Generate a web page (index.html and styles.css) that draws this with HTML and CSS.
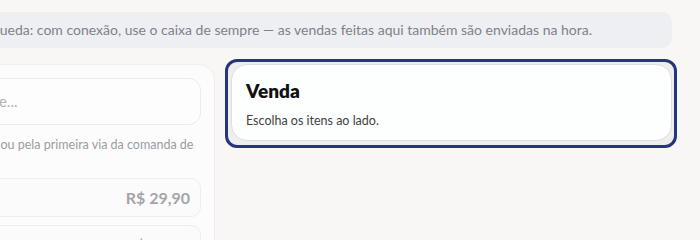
FILE: index.html
```html
<!DOCTYPE html>
<html lang="pt-BR">
<head>
<meta charset="utf-8">
<title>Venda</title>
<link rel="stylesheet" href="styles.css">
</head>
<body>
<div class="page">
  <div class="notice">Modo offline. Em caso de queda: com conexão, use o caixa de sempre — as vendas feitas aqui também são enviadas na hora.</div>
  <div class="columns">
    <section class="catalog">
      <div class="search">Buscar produto pelo nome...</div>
      <p class="hint">Busque pelo nome do produto ou pela primeira via da comanda de mesa.</p>
      <div class="item"><span class="item-name">Pizza média</span><span class="price">R$ 29,90</span></div>
      <div class="item"><span class="item-name">Pizza grande</span><span class="price">R$ 34,90</span></div>
    </section>
    <div class="sale-ring">
      <section class="sale">
        <h2 class="sale-title">Venda</h2>
        <p class="sale-sub">Escolha os itens ao lado.</p>
      </section>
    </div>
  </div>
</div>
</body>
</html>
```

FILE: styles.css
```css
* { box-sizing: border-box; }
html, body { margin: 0; padding: 0; }
body {
  background: #f8f7f6;
  font-family: Lato, "Noto Sans", sans-serif;
  overflow: hidden;
  width: 700px;
  height: 240px;
}
.page {
  margin-left: -300px;
  width: 972px;
  padding-top: 12px;
  display: flex;
  flex-direction: column;
  gap: 16px;
}
.notice {
  height: 36px;
  background: #eeeff3;
  border-radius: 10px;
  color: #7e818a;
  font-size: 14px;
  line-height: 36px;
  white-space: nowrap;
  overflow: hidden;
  text-align: right;
  padding-right: 80px;
}
.columns {
  display: grid;
  grid-template-columns: 1fr 441px;
  gap: 16px;
}
.catalog {
  background: #fcfcfc;
  border: 1px solid #efefef;
  border-radius: 16px;
  padding: 13px 13px 20px;
  height: 300px;
}
.search {
  height: 47px;
  border: 1px solid #ebebeb;
  border-radius: 12px;
  background: #fdfdfd;
  color: #b3b3b3;
  font-size: 15px;
  line-height: 45px;
  padding-left: 118px;
  white-space: nowrap;
}
.hint {
  margin: 11px 0 6px;
  color: #9a9ca2;
  font-size: 12.5px;
  line-height: 18px;
  padding-left: 117px;
  padding-right: 5px;
}
.item {
  height: 39px;
  border: 1px solid #eeeeee;
  border-radius: 10px;
  background: #fbfbfb;
  display: flex;
  align-items: center;
  justify-content: space-between;
  padding: 0 10px 0 14px;
  margin-bottom: 8px;
}
.item-name { color: #555; font-size: 14px; }
.price {
  color: #a4a5a8;
  font-weight: 700;
  font-size: 16px;
}
.sale-ring {
  margin-left: -6px;
  margin-top: -5px;
  align-self: start;
  border: 3px solid #26357f;
  border-radius: 12px;
  background: #efeeec;
  padding: 2px 2px 4px 3px;
  width: 452px;
}
.sale {
  background: #fdfefe;
  border: 1px solid #dedede;
  border-radius: 16px;
  height: 77px;
  padding: 14px 14px;
}
.sale-title {
  margin: 0;
  font-size: 19px;
  font-weight: 800;
  color: #111;
  line-height: 24px;
}
.sale-sub {
  margin: 10px 0 0;
  font-size: 12.5px;
  color: #3f3f3f;
  line-height: 16px;
}
```
